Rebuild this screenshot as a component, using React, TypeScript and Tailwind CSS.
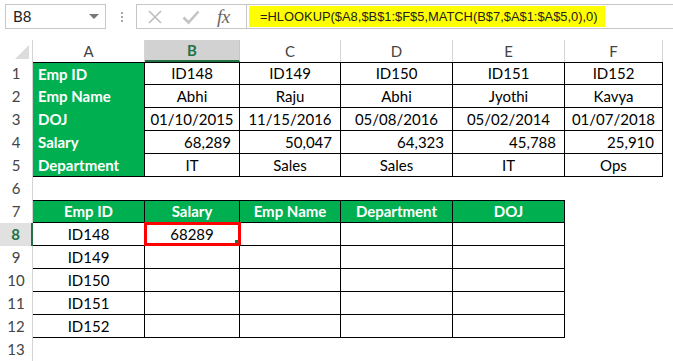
import React from 'react';

const W = ['w-[112px]', 'w-[95px]', 'w-[101px]', 'w-[112px]', 'w-[112px]', 'w-[98px]'];
const LETTERS = ['A', 'B', 'C', 'D', 'E', 'F'];

const table1 = [
  ['Emp ID', 'ID148', 'ID149', 'ID150', 'ID151', 'ID152'],
  ['Emp Name', 'Abhi', 'Raju', 'Abhi', 'Jyothi', 'Kavya'],
  ['DOJ', '01/10/2015', '11/15/2016', '05/08/2016', '05/02/2014', '01/07/2018'],
  ['Salary', '68,289', '50,047', '64,323', '45,788', '25,910'],
  ['Department', 'IT', 'Sales', 'Sales', 'IT', 'Ops'],
];

const header2 = ['Emp ID', 'Salary', 'Emp Name', 'Department', 'DOJ'];
const ids = ['ID148', 'ID149', 'ID150', 'ID151', 'ID152'];

function RowHead({ n, selected }: { n: number; selected?: boolean }) {
  return (
    <div
      className={
        selected
          ? 'w-[33px] shrink-0 flex items-center justify-center bg-[#e1e1e1] border-r-2 border-[#217346] font-bold text-[#217346]'
          : 'w-[33px] shrink-0 flex items-center justify-center border-r border-[#d4d4d4] text-[#444]'
      }
    >
      {n}
    </div>
  );
}

function FormulaBar() {
  return (
    <div className="h-[40px] flex items-start pt-[4px]">
      {/* name box */}
      <div className="ml-[5px] w-[101px] h-[25px] border border-[#c6c6c6] flex items-center pl-[7px] pr-[6px] text-[15px] text-[#222]">
        <span className="flex-1">B8</span>
        <span className="w-0 h-0 border-l-[5px] border-r-[5px] border-t-[5px] border-l-transparent border-r-transparent border-t-[#777]" />
      </div>
      {/* grip dots */}
      <div className="ml-[15px] mt-[8px] flex flex-col gap-[2px]">
        <span className="w-[2px] h-[2px] bg-[#a6a6a6]" />
        <span className="w-[2px] h-[2px] bg-[#a6a6a6]" />
        <span className="w-[2px] h-[2px] bg-[#a6a6a6]" />
      </div>
      {/* cancel / enter / fx */}
      <div className="ml-[13px] w-[111px] h-[25px] border border-[#c6c6c6] flex items-center">
        <svg width="16" height="16" viewBox="0 0 16 16" className="ml-[10px]">
          <path d="M2 2 L14 14 M14 2 L2 14" stroke="#bdbdbd" strokeWidth="1.6" />
        </svg>
        <svg width="18" height="16" viewBox="0 0 18 16" className="ml-[19px]">
          <path d="M1.5 8.5 L6.5 13.5 L16.5 2.5" stroke="#c4c4c4" strokeWidth="2.6" fill="none" />
        </svg>
        <span className="ml-[17px] font-['Liberation_Serif',serif] italic text-[19px] text-[#666] leading-none tracking-[-0.5px]">
          fx
        </span>
      </div>
      {/* formula */}
      <div className="flex-1 h-[25px] border-t border-b border-[#c6c6c6] pl-[2px] py-[1px]">
        <div className="w-[356px] h-full bg-[#ffff00] flex items-center pl-[11px] font-['Liberation_Sans',sans-serif] text-[12.9px] text-[#222]">
          =HLOOKUP($A8,$B$1:$F$5,MATCH(B$7,$A$1:$A$5,0),0)
        </div>
      </div>
    </div>
  );
}

function ColumnHeaders() {
  return (
    <div className="flex h-[22px] text-[#444]">
      <div className="w-[33px] shrink-0 border-r border-[#d4d4d4] flex items-end justify-end pr-[3px] pb-[3px]">
        <svg width="14" height="14" viewBox="0 0 14 14">
          <path d="M14 0 L14 14 L0 14 Z" fill="#dcdcdc" />
        </svg>
      </div>
      {LETTERS.map((l, i) =>
        i === 1 ? (
          <div
            key={l}
            className={`${W[i]} shrink-0 flex items-center justify-center bg-[#d2d2d2] border-b-2 border-[#217346] border-r border-r-[#c6c6c6] font-bold text-[#217346]`}
          >
            {l}
          </div>
        ) : (
          <div key={l} className={`${W[i]} shrink-0 flex items-center justify-center border-r border-[#d4d4d4]`}>
            {l}
          </div>
        )
      )}
      <div className="flex-1" />
    </div>
  );
}

export default function App() {
  return (
    <div className="w-[673px] h-[361px] overflow-hidden bg-white font-['Lato','Open_Sans',sans-serif] text-[15px] text-black">
      <FormulaBar />
      <ColumnHeaders />

      {/* rows 1-5 */}
      {table1.map((row, r) => (
        <div key={r} className="flex h-[23px]">
          <RowHead n={r + 1} />
          {row.map((v, c) =>
            c === 0 ? (
              <div
                key={c}
                className={`${W[0]} shrink-0 flex items-center pl-[5px] bg-[#00b050] text-white font-bold border-r border-black ${r === 4 ? 'border-b' : ''} ${r === 0 ? 'border-t' : ''}`}
              >
                {v}
              </div>
            ) : (
              <div
                key={c}
                className={`${W[c]} shrink-0 flex items-center border-r border-b border-black ${r === 0 ? 'border-t' : ''} ${r === 3 ? 'justify-end pr-[8px]' : 'justify-center'}`}
              >
                {v}
              </div>
            )
          )}
        </div>
      ))}

      {/* row 6 */}
      <div className="flex h-[23px]">
        <RowHead n={6} />
      </div>

      {/* row 7 header */}
      <div className="flex h-[23px]">
        <RowHead n={7} />
        {header2.map((h, c) => (
          <div
            key={h}
            className={`${W[c]} shrink-0 flex items-center justify-center bg-[#00b050] text-white font-bold border-t border-r border-b border-black`}
          >
            {h}
          </div>
        ))}
      </div>

      {/* rows 8-12 */}
      {ids.map((id, r) => (
        <div key={id} className="flex h-[23px]">
          <RowHead n={r + 8} selected={r === 0} />
          {[0, 1, 2, 3, 4].map((c) => (
            <div
              key={c}
              className={`${W[c]} shrink-0 flex items-center justify-center border-r border-b border-black relative`}
            >
              {c === 0 ? id : r === 0 && c === 1 ? '68289' : ''}
              {r === 0 && c === 1 && (
                <span className="absolute -left-[1px] -top-[1px] -right-[2px] -bottom-[1px] border-[3px] border-[#ff0000]">
                  <span className="absolute right-0 bottom-0 w-[3px] h-[3px] bg-[#217346]" />
                </span>
              )}
            </div>
          ))}
        </div>
      ))}

      {/* row 13 */}
      <div className="flex h-[23px]">
        <RowHead n={13} />
      </div>
    </div>
  );
}
